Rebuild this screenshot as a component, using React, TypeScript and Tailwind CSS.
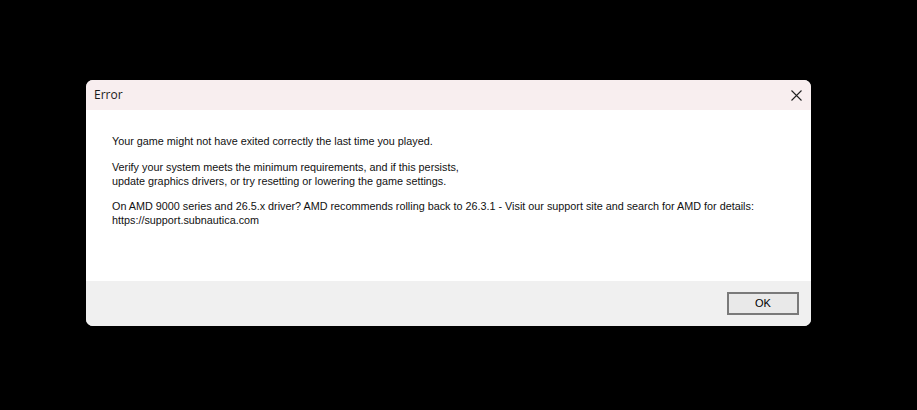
import React from "react";

const App = () => {
  return (
    <div className="w-[917px] h-[410px] bg-black flex items-start font-['Liberation_Sans',sans-serif]">
      <div className="ml-[86px] mt-[80px] w-[725px] h-[246px] rounded-[7px] overflow-hidden bg-white flex flex-col">
        <div className="h-[30px] bg-[#f8eeef] flex items-center justify-between pl-2 pr-[9px]">
          <span className="text-[12px] text-[#1a1a1a] font-['Open_Sans',sans-serif]">Error</span>
          <svg width="11" height="11" viewBox="0 0 11 11" className="text-[#222]">
            <path d="M0.5 0.5 L10.5 10.5 M10.5 0.5 L0.5 10.5" stroke="currentColor" strokeWidth="1.1" />
          </svg>
        </div>
        <div className="flex-1 pl-[26px] pt-[24px] text-[10.8px] leading-[14.5px] text-[#111]">
          <p>Your game might not have exited correctly the last time you played.</p>
          <p className="mt-[11px]">
            Verify your system meets the minimum requirements, and if this persists,
            <br />
            update graphics drivers, or try resetting or lowering the game settings.
          </p>
          <p className="mt-[10px]">
            On AMD 9000 series and 26.5.x driver? AMD recommends rolling back to 26.3.1 - Visit our support site and search for AMD for details:
            <br />
            https://support.subnautica.com
          </p>
        </div>
        <div className="h-[45px] bg-[#f0f0f0] flex items-center justify-end pr-[12px]">
          <button className="w-[72px] h-[23px] border-2 border-[#7a7a7a] bg-[#e9e9e9] text-[11px] text-black font-['Liberation_Sans',sans-serif] flex items-center justify-center">
            OK
          </button>
        </div>
      </div>
    </div>
  );
};

export default App;
